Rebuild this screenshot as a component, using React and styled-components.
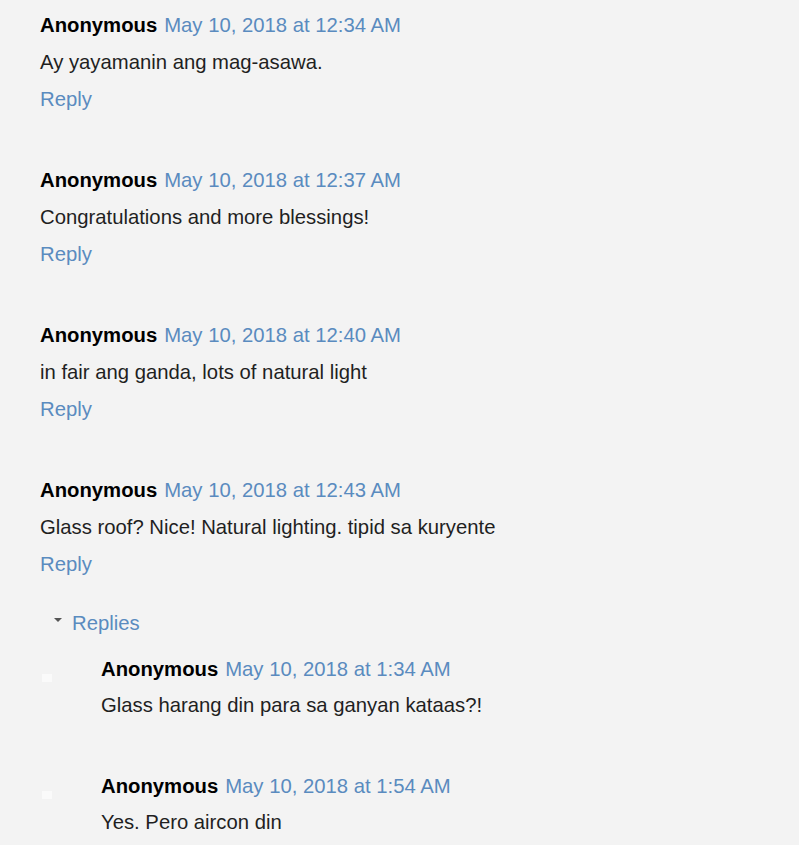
import styled, { createGlobalStyle } from "styled-components";

const GlobalStyle = createGlobalStyle`
  body {
    margin: 0;
    background: #f3f3f3;
    font-family: "Liberation Sans", Arial, sans-serif;
  }
`;

const comments = [
  {
    time: "May 10, 2018 at 12:34 AM",
    text: "Ay yayamanin ang mag-asawa.",
  },
  {
    time: "May 10, 2018 at 12:37 AM",
    text: "Congratulations and more blessings!",
  },
  {
    time: "May 10, 2018 at 12:40 AM",
    text: "in fair ang ganda, lots of natural light",
  },
  {
    time: "May 10, 2018 at 12:43 AM",
    text: "Glass roof? Nice! Natural lighting. tipid sa kuryente",
    replies: [
      {
        time: "May 10, 2018 at 1:34 AM",
        text: "Glass harang din para sa ganyan kataas?!",
      },
      { time: "May 10, 2018 at 1:54 AM", text: "Yes. Pero aircon din" },
    ],
  },
];

const Thread = styled.div`
  padding: 13px 0 0 40px;
  font-size: 20.3px;
  line-height: 24px;
  color: #222;
`;

const Comment = styled.div`
  margin-bottom: 57px;

  &:last-child {
    margin-bottom: 0;
  }
`;

const Header = styled.div`
  display: flex;
  gap: 7px;
  white-space: nowrap;
`;

const Author = styled.span`
  font-weight: bold;
  color: #000;
`;

const Stamp = styled.a`
  color: #5a8bbf;
  text-decoration: none;
`;

const Body = styled.p`
  margin: ${(p) => (p.$reply ? "12px" : "13px")} 0 0;
  color: #1f1f1f;
`;

const ReplyLink = styled.a`
  display: block;
  margin-top: 13px;
  color: #5a8bbf;
  text-decoration: none;
`;

const Toggle = styled.div`
  display: flex;
  align-items: center;
  margin: 35px 0 0 14px;
  color: #5a8bbf;
`;

const Caret = styled.span`
  width: 0;
  height: 0;
  margin-right: 10px;
  border-left: 4px solid transparent;
  border-right: 4px solid transparent;
  border-top: 4px solid #555;
  transform: translateY(-3px);
`;

const ReplyList = styled.div`
  margin-top: 22px;
`;

const ReplyItem = styled.div`
  display: flex;
  margin-bottom: 57px;

  &:last-child {
    margin-bottom: 0;
  }
`;

const Avatar = styled.div`
  flex: none;
  width: 10px;
  height: 8px;
  margin: 17px 49px 0 2px;
  background: #fafafa;
`;

const ReplyBody = styled.div`
  flex: 1;
`;

export default function App() {
  return (
    <>
      <GlobalStyle />
      <Thread>
        {comments.map((c, i) => (
          <Comment key={i}>
            <Header>
              <Author>Anonymous</Author>
              <Stamp href="#">{c.time}</Stamp>
            </Header>
            <Body>{c.text}</Body>
            <ReplyLink href="#">Reply</ReplyLink>
            {c.replies && (
              <>
                <Toggle>
                  <Caret />
                  Replies
                </Toggle>
                <ReplyList>
                  {c.replies.map((r, j) => (
                    <ReplyItem key={j}>
                      <Avatar />
                      <ReplyBody>
                        <Header>
                          <Author>Anonymous</Author>
                          <Stamp href="#">{r.time}</Stamp>
                        </Header>
                        <Body $reply>{r.text}</Body>
                      </ReplyBody>
                    </ReplyItem>
                  ))}
                </ReplyList>
              </>
            )}
          </Comment>
        ))}
      </Thread>
    </>
  );
}
